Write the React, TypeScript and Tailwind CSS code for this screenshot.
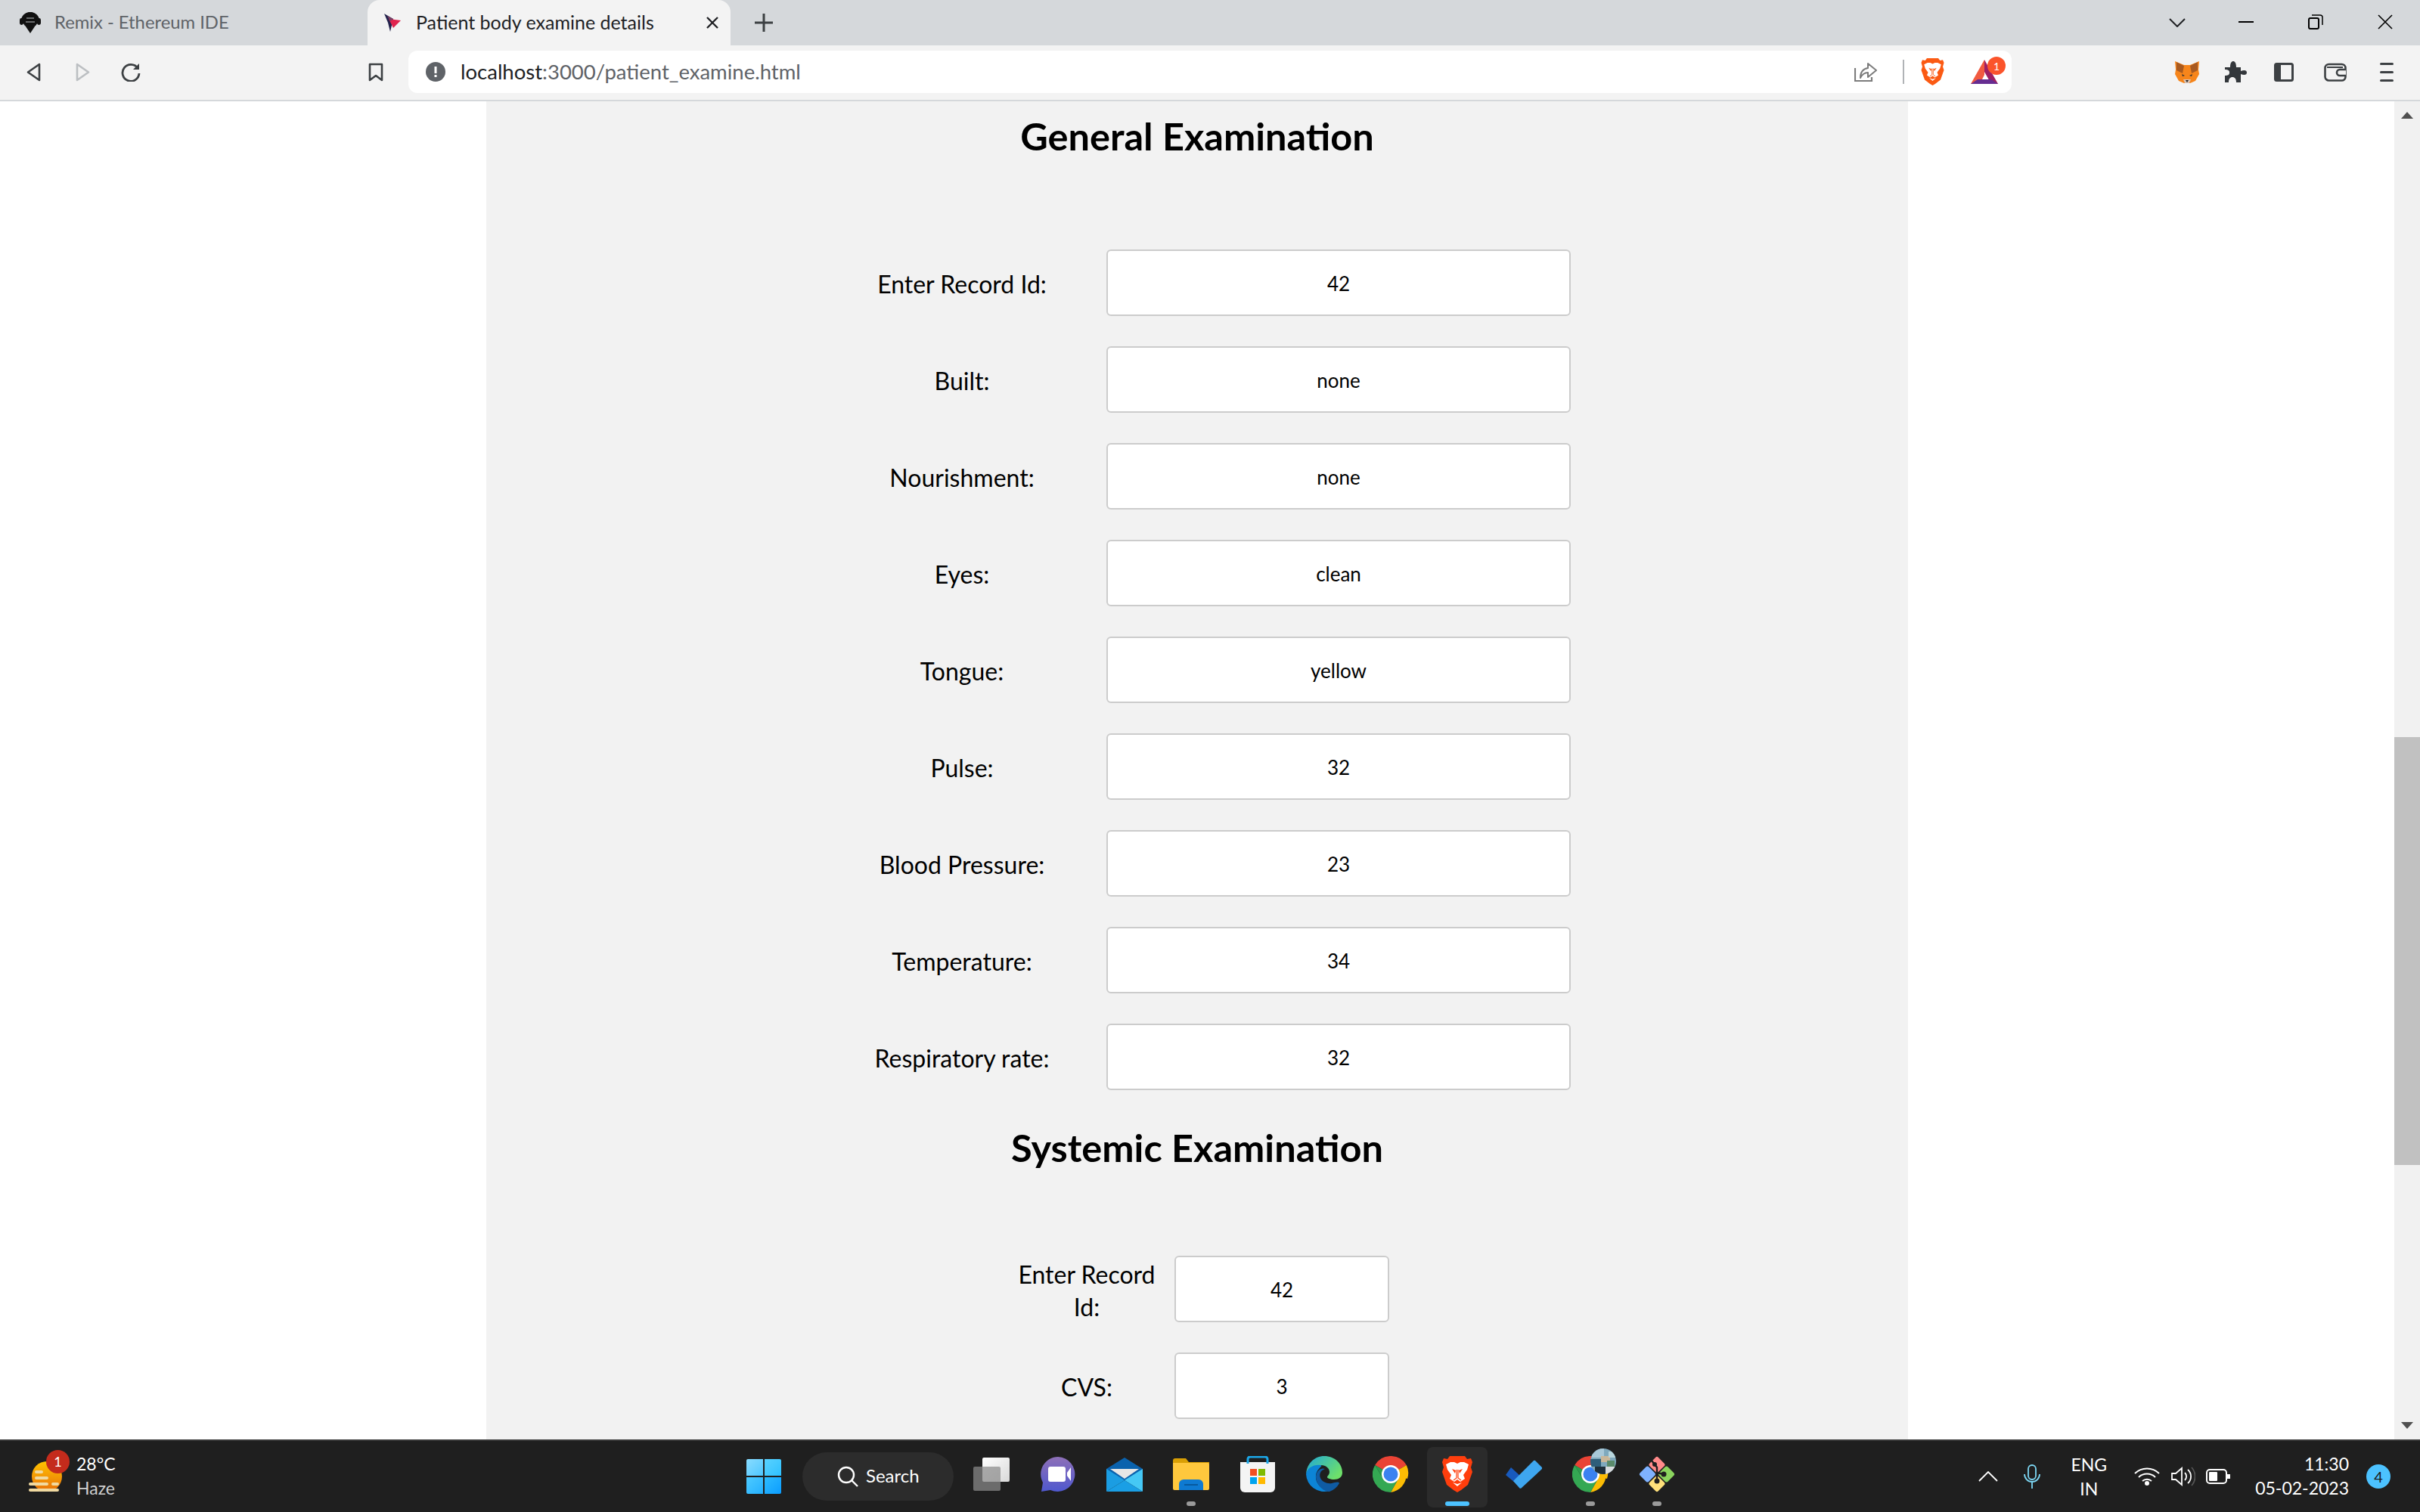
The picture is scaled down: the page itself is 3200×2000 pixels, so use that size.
import React from "react";

const generalRows: [string, string][] = [
  ["Enter Record Id:", "42"],
  ["Built:", "none"],
  ["Nourishment:", "none"],
  ["Eyes:", "clean"],
  ["Tongue:", "yellow"],
  ["Pulse:", "32"],
  ["Blood Pressure:", "23"],
  ["Temperature:", "34"],
  ["Respiratory rate:", "32"],
];

function Field({ label, value, wrapped }: { label: string; value: string; wrapped?: boolean }) {
  return (
    <>
      <label className={wrapped ? "translate-y-[2px] self-center text-center text-[32px] leading-[43px] text-black" : "translate-y-[1px] self-center text-center text-[32px] leading-[43px] text-black"}>{label}</label>
      <input
        readOnly
        value={value}
        className="h-[88px] w-full rounded-[6px] border-2 border-[#cccccc] bg-white pt-[1px] text-center text-[26px] text-black outline-none"
      />
    </>
  );
}

function BraveIcon({ w, h, bg }: { w: number; h: number; bg: string }) {
  return (
    <svg width={w} height={h} viewBox="0 0 40 48">
      <path d="M10 0H30L33 4L38 3L40 8L38 15L40 21L34 38L25 45L20 48L15 45L6 38L0 21L2 15L0 8L2 3L7 4Z" fill={bg} />
      <path d="M11 8H16L20 10L24 8H29L35 11L33 18L28 25L30 30L24 34L20 31L16 34L10 30L12 25L7 18L5 11Z" fill="#fff" />
      <path d="M20 37L26 35L20 40L14 35Z" fill="#fff" />
      <path d="M13 17L18 19L17 23ZM27 17L22 19L23 23Z" fill={bg} />
      <path d="M19 18V29L15 32M21 18V29L25 32" stroke={bg} strokeWidth="1.2" fill="none" />
    </svg>
  );
}

function Chrome({ size }: { size: number }) {
  return (
    <svg width={size} height={size} viewBox="0 0 48 48">
      <path d="M24 24L3.2 12A24 24 0 0 1 44.8 12Z" fill="#ea4335" />
      <path d="M24 24H44.8A24 24 0 0 1 24 48L34 30ZM44.8 12A24 24 0 0 1 46 30L24 24Z" fill="#fbbc04" />
      <path d="M24 48A24 24 0 0 1 3.2 12L14 30L24 24L34 30Z" fill="#34a853" />
      <path d="M3.2 12L14 30L24 24Z" fill="#2d9e4e" />
      <circle cx="24" cy="24" r="12" fill="#fff" />
      <circle cx="24" cy="24" r="9.5" fill="#3b82f0" />
    </svg>
  );
}

function TaskIcon({ children, dot, active }: { children: React.ReactNode; dot?: boolean; active?: boolean }) {
  return (
    <div className="relative flex h-[80px] w-[88px] items-center justify-center">
      {active && <div className="absolute inset-y-0 left-[4px] right-[4px] rounded-[8px] bg-[#2b2b2b]" />}
      <div className="relative -mt-[8px] flex items-center justify-center">{children}</div>
      {dot && <div className="absolute bottom-[2px] h-[6px] w-[12px] rounded-full bg-[#9a9a9a]" />}
      {active && <div className="absolute bottom-[2px] h-[6px] w-[32px] rounded-full bg-[#4cc2ff]" />}
    </div>
  );
}

export default function App() {
  return (
    <div className="flex h-[2000px] w-[3200px] flex-col overflow-hidden font-['Lato','Noto_Sans',sans-serif]">
      {/* tab strip */}
      <div className="flex h-[60px] shrink-0 items-end bg-[#d5d8db]">
        <div className="flex h-full w-[486px] items-center pl-[24px]">
          <svg width="32" height="28" viewBox="0 0 32 28" className="shrink-0">
            <circle cx="16" cy="11" r="10" fill="#111" />
            <path d="M16 28L10 19H22Z" fill="#111" />
            <path d="M5 12A11 11 0 0 1 27 12" stroke="#111" strokeWidth="2.4" fill="none" />
            <path d="M11 8H21M10 13H22" stroke="#d5d8db" strokeWidth="0.9" />
            <rect x="2" y="8" width="5" height="9" rx="2.4" fill="#111" />
            <rect x="25" y="8" width="5" height="9" rx="2.4" fill="#111" />
          </svg>
          <span className="ml-[16px] text-[23.8px] text-[#5f6368]">Remix - Ethereum IDE</span>
        </div>
        <div className="flex h-full w-[480px] items-center rounded-t-[16px] bg-[#f3f3f3] pl-[20px]">
          <svg width="26" height="24" viewBox="0 0 26 24" className="shrink-0">
            <path d="M2 0L14 7L10 24L7 12Z" fill="#24234d" />
            <path d="M8 7L24 9L14 19Z" fill="#e0234e" />
            <path d="M6 3L14 7L10 10Z" fill="#7d3f63" />
          </svg>
          <span className="ml-[18px] w-[383px] text-[25px] text-[#202124]">Patient body examine details</span>
          <svg width="18" height="16" viewBox="0 0 18 16" className="shrink-0">
            <path d="M2 1L16 15M16 1L2 15" stroke="#202124" strokeWidth="2.4" />
          </svg>
        </div>
        <div className="ml-[32px] flex h-full items-center">
          <svg width="24" height="24" viewBox="0 0 24 24">
            <path d="M12 0V24M0 12H24" stroke="#3c4043" strokeWidth="3" />
          </svg>
        </div>
        <div className="ml-auto flex h-full items-start">
          <svg width="22" height="12" viewBox="0 0 22 12" className="ml-0 mt-[24px]">
            <path d="M1 1L11 11L21 1" stroke="#202124" strokeWidth="2" fill="none" />
          </svg>
          <div className="ml-[70px] mt-[28px] h-[2px] w-[20px] bg-black" />
          <svg width="20" height="20" viewBox="0 0 20 20" className="ml-[72px] mt-[19px]">
            <rect x="1" y="5" width="13" height="14" rx="2" stroke="#000" strokeWidth="2" fill="none" />
            <path d="M5 1H16A3 3 0 0 1 19 4V14" stroke="#000" strokeWidth="1.5" fill="none" />
          </svg>
          <svg width="20" height="20" viewBox="0 0 20 20" className="ml-[72px] mr-[36px] mt-[19px]">
            <path d="M1 1L19 19M19 1L1 19" stroke="#000" strokeWidth="1.6" />
          </svg>
        </div>
      </div>

      {/* toolbar */}
      <div className="flex h-[74px] shrink-0 items-center border-b-2 border-[#d5d8db] bg-[#f3f3f3] pb-[2px]">
        <svg width="19" height="25" viewBox="0 0 19 25" className="ml-[35px]">
          <path d="M17 2L2 12.5L17 23Z" stroke="#3c4043" strokeWidth="2.6" fill="none" strokeLinejoin="round" />
        </svg>
        <svg width="19" height="25" viewBox="0 0 19 25" className="ml-[46px]">
          <path d="M2 2L17 12.5L2 23Z" stroke="#bcbfc2" strokeWidth="2.6" fill="none" strokeLinejoin="round" />
        </svg>
        <svg width="26" height="26" viewBox="0 0 26 26" className="ml-[41px]">
          <path d="M22 8A11 11 0 1 0 24 15" stroke="#3c4043" strokeWidth="2.8" fill="none" />
          <path d="M24 2V10H16Z" fill="#3c4043" />
        </svg>
        <svg width="20" height="25" viewBox="0 0 20 25" className="ml-[301px]">
          <path d="M2 2H18V23L10 17L2 23Z" stroke="#3c4043" strokeWidth="2.6" fill="none" strokeLinejoin="round" />
        </svg>
        <div className="ml-[33px] flex h-[56px] w-[2120px] items-center rounded-[12px] bg-white">
          <svg width="26" height="26" viewBox="0 0 26 26" className="ml-[23px]">
            <circle cx="13" cy="13" r="13" fill="#5f6368" />
            <rect x="11.5" y="6" width="3" height="9" fill="#fff" />
            <rect x="11.5" y="17" width="3" height="3" fill="#fff" />
          </svg>
          <span className="ml-[20px] text-[27.5px] text-[#202124]">
            localhost<span className="text-[#5f6368]">:3000/patient_examine.html</span>
          </span>
          <svg width="30" height="28" viewBox="0 0 30 28" className="ml-auto">
            <path d="M1 9V26H23V21" stroke="#7c7c7c" strokeWidth="2.2" fill="none" />
            <path d="M8 22C8 14 12 10 18 9V3L29 12L18 21V15C13 15 10 18 8 22Z" stroke="#7c7c7c" strokeWidth="2" fill="none" strokeLinejoin="round" />
          </svg>
          <div className="ml-[34px] h-[32px] w-[2px] bg-[#b0b3b6]" />
          <div className="ml-[22px]"><BraveIcon w={31} h={36} bg="#fb5a13" /></div>
          <div className="relative ml-[35px] mr-[18px]">
            <svg width="36" height="32" viewBox="0 0 36 32" className="block">
              <path d="M18 0L9 16L0 32H12L18 20Z" fill="#f15a40" />
              <path d="M18 0L36 32H27L18 16Z" fill="#9e1f63" />
              <path d="M0 32L9 26H27L36 32Z" fill="#662d91" />
            </svg>
            <div className="absolute -right-[10px] -top-[4px] flex h-[24px] w-[24px] items-center justify-center rounded-full bg-[#fb542b] text-[14px] text-white">1</div>
          </div>
        </div>
        <svg width="32" height="30" viewBox="0 0 32 30" className="ml-[216px]">
          <path d="M0 1L12 6H20L32 1L31 12L32 18L27 27L20 30H12L5 27L0 18L1 12Z" fill="#f6851b" />
          <path d="M2 2L12 7L10 17L2 13ZM30 2L20 7L22 17L30 13Z" fill="#a85a20" />
          <path d="M11 25H21L19 30H13Z" fill="#d7c1b3" />
          <path d="M14 26H18L16 29Z" fill="#222" />
          <path d="M9 18L13 20L10 21ZM23 18L19 20L22 21Z" fill="#333" />
        </svg>
        <svg width="29" height="28" viewBox="0 0 29 28" className="ml-[34px]">
          <path d="M0 8H7C7 2 9 0 11 0S15 2 15 8H21V13C26 11 29 12 29 15S26 19 21 17V28H15C15 23 13 21 10 21S5 23 5 28H0V19C4 19 6 18 6 15S4 11 0 11Z" fill="#33373b" />
        </svg>
        <svg width="26" height="25" viewBox="0 0 26 25" className="ml-[36px]">
          <rect x="1.5" y="1.5" width="23" height="22" rx="2" stroke="#3c4043" strokeWidth="3" fill="none" />
          <rect x="1" y="1" width="8" height="23" fill="#3c4043" />
        </svg>
        <svg width="30" height="26" viewBox="0 0 30 26" className="ml-[40px]">
          <rect x="1.5" y="3" width="27" height="21.5" rx="5" stroke="#3c4043" strokeWidth="2.6" fill="none" />
          <path d="M4 7H25" stroke="#3c4043" strokeWidth="2" />
          <path d="M29 10H21A4 4 0 0 0 21 18H29" stroke="#3c4043" strokeWidth="2.6" fill="#f3f3f3" />
        </svg>
        <div className="ml-[44px] flex h-[25px] w-[18px] flex-col justify-between">
          <div className="h-[3px] rounded-full bg-[#3c4043]" />
          <div className="h-[3px] rounded-full bg-[#3c4043]" />
          <div className="h-[3px] rounded-full bg-[#3c4043]" />
        </div>
      </div>

      {/* page */}
      <div className="flex min-h-0 flex-1 overflow-hidden bg-white">
        <div className="flex min-w-0 flex-1 justify-center">
          <div className="h-full w-[1880px] overflow-hidden bg-[#f2f2f2] pt-[14px]">
            <h1 className="text-center text-[50.5px] font-bold leading-[64px] text-black">General Examination</h1>
            <div className="mx-auto mt-[118px] grid w-[988px] grid-cols-[366px_614px] gap-x-[8px] gap-y-[40px]">
              {generalRows.map(([l, v]) => (
                <Field key={l} label={l} value={v} />
              ))}
            </div>
            <h1 className="mt-[44px] text-center text-[50.5px] font-bold leading-[64px] text-black">Systemic Examination</h1>
            <div className="mx-auto mt-[111px] grid w-[508px] grid-cols-[216px_284px] gap-x-[8px] gap-y-[40px]">
              <Field label="Enter Record Id:" value="42" wrapped />
              <Field label="CVS:" value="3" />
            </div>
          </div>
        </div>
        <div className="flex w-[34px] shrink-0 flex-col items-center bg-[#f1f1f1]">
          <div className="mt-[14px] h-0 w-0 border-x-[8px] border-b-[9px] border-x-transparent border-b-[#505050]" />
          <div className="mt-[818px] h-[566px] w-full bg-[#c1c1c1]" />
          <div className="mt-auto mb-[14px] h-0 w-0 border-x-[8px] border-t-[9px] border-x-transparent border-t-[#505050]" />
        </div>
      </div>

      {/* taskbar */}
      <div className="flex h-[96px] shrink-0 items-center border-t-2 border-[#3a3a3a] bg-[#1f1f1f] text-white">
        <div className="relative flex h-full w-[966px] shrink-0 items-center pl-[38px]">
          <svg width="45" height="40" viewBox="0 0 45 40" className="shrink-0">
            <defs>
              <linearGradient id="sun" x1="0" y1="0" x2="0" y2="1">
                <stop offset="0" stopColor="#ffc400" />
                <stop offset="1" stopColor="#e8700a" />
              </linearGradient>
            </defs>
            <circle cx="24" cy="20" r="20" fill="url(#sun)" />
            <g fill="#f0d9a0">
              <rect x="8" y="12" width="11" height="4" rx="2" />
              <rect x="8" y="20" width="18" height="4" rx="2" />
              <rect x="0" y="28" width="26" height="4" rx="2" />
              <rect x="30" y="28" width="10" height="4" rx="2" />
              <rect x="0" y="36" width="40" height="4" rx="2" />
            </g>
          </svg>
          <div className="absolute left-[61px] top-[12px] flex h-[31px] w-[31px] items-center justify-center rounded-full bg-[#c42b1c] text-[18px]">1</div>
          <div className="ml-[18px] -mt-[3px] flex flex-col text-[23px] leading-[32px]">
            <span>28°C</span>
            <span className="text-[#cfcfcf]">Haze</span>
          </div>
        </div>
        <div className="flex h-full w-[88px] shrink-0 items-center justify-center">
          <div className="grid h-[46px] w-[46px] grid-cols-2 gap-[2px]">
            <div className="rounded-tl-[2px] bg-gradient-to-br from-[#88dcff] to-[#4cc6ff]" />
            <div className="rounded-tr-[2px] bg-gradient-to-br from-[#58d2ff] to-[#2cc0ff]" />
            <div className="rounded-bl-[2px] bg-gradient-to-br from-[#4ccaff] to-[#22b0ff]" />
            <div className="rounded-br-[2px] bg-gradient-to-br from-[#2cbcff] to-[#0a9cff]" />
          </div>
        </div>
        <div className="ml-[7px] flex h-[64px] w-[200px] shrink-0 items-center rounded-full bg-[#2c2c2c] pl-[46px]">
          <svg width="28" height="28" viewBox="0 0 28 28">
            <circle cx="12" cy="12" r="10" stroke="#fff" strokeWidth="2.4" fill="none" />
            <path d="M19 19L27 27" stroke="#fff" strokeWidth="2.4" />
          </svg>
          <span className="ml-[10px] -mt-[2px] text-[24px]">Search</span>
        </div>
        <div className="ml-[6px] flex items-start pt-[2px]">
          <TaskIcon>
            <svg width="48" height="44" viewBox="0 0 48 44">
              <defs>
                <linearGradient id="tv1" x1="0" y1="0" x2="1" y2="1">
                  <stop offset="0" stopColor="#ffffff" />
                  <stop offset="1" stopColor="#d9d9d9" />
                </linearGradient>
              </defs>
              <rect x="12" y="0" width="36" height="32" rx="2" fill="url(#tv1)" />
              <rect x="0" y="12" width="36" height="32" rx="2" fill="#8a8a8a" fillOpacity="0.72" />
            </svg>
          </TaskIcon>
          <TaskIcon>
            <svg width="46" height="46" viewBox="0 0 46 46">
              <defs>
                <linearGradient id="meet" x1="0" y1="0" x2="0" y2="1">
                  <stop offset="0" stopColor="#8e70b8" />
                  <stop offset="1" stopColor="#4f58cf" />
                </linearGradient>
              </defs>
              <path d="M23 0A23 23 0 1 1 13 44L1 46L3 34A23 23 0 0 1 23 0Z" fill="url(#meet)" />
              <rect x="10" y="13" width="23" height="20" rx="3" fill="#fff" />
              <path d="M35 21L40 14V32L35 25Z" fill="#fff" />
            </svg>
          </TaskIcon>
          <TaskIcon>
            <svg width="48" height="45" viewBox="0 0 48 45">
              <path d="M0 15L24 0L48 15V30H0Z" fill="#0a62ad" />
              <path d="M5 15H43L24 28Z" fill="#e6e6e6" />
              <path d="M0 15L24 30L0 45Z" fill="#1b9de2" />
              <path d="M48 15V45L24 30Z" fill="#45c8f5" />
              <path d="M0 45L24 30L48 45Z" fill="#1a9fe5" />
            </svg>
          </TaskIcon>
          <TaskIcon dot>
            <svg width="48" height="42" viewBox="0 0 48 42">
              <path d="M0 3A3 3 0 0 1 3 0H17L21 5H48V10H0Z" fill="#d99f05" />
              <path d="M0 6H46A2 2 0 0 1 48 8V40A2 2 0 0 1 46 42H2A2 2 0 0 1 0 40Z" fill="#ffc83d" />
              <path d="M8 42V34A6 6 0 0 1 14 28H34A6 6 0 0 1 40 34V42Z" fill="#0e7ad2" />
              <path d="M15 35H33" stroke="#064f8c" strokeWidth="1.5" />
            </svg>
          </TaskIcon>
          <TaskIcon>
            <svg width="46" height="48" viewBox="0 0 46 48">
              <path d="M0 8H46V42A6 6 0 0 1 40 48H6A6 6 0 0 1 0 42Z" fill="#f4f4f4" />
              <path d="M10 10V4A3 3 0 0 1 13 1H33A3 3 0 0 1 36 4V10" stroke="#1ba7e8" strokeWidth="3" fill="none" />
              <rect x="13" y="17" width="9" height="9" fill="#f25022" />
              <rect x="24" y="17" width="9" height="9" fill="#7fba00" />
              <rect x="13" y="28" width="9" height="9" fill="#00a4ef" />
              <rect x="24" y="28" width="9" height="9" fill="#ffb900" />
            </svg>
          </TaskIcon>
          <TaskIcon>
            <svg width="48" height="48" viewBox="0 0 48 48">
              <defs>
                <linearGradient id="edge1" x1="0" y1="0" x2="1" y2="0.6">
                  <stop offset="0" stopColor="#1fa8d8" />
                  <stop offset="1" stopColor="#6ee06a" />
                </linearGradient>
              </defs>
              <path d="M24 0C38 0 48 10 48 22C48 28 43 31 37 31C32 31 28 29 28 28C28 26 31 25 31 21C31 16 26 12 20 12C10 12 1 18 0 24C1 10 11 0 24 0Z" fill="url(#edge1)" />
              <path d="M0 24C1 16 10 11 19 12C24 13 14 16 13 26C12 36 22 46 31 46A24 24 0 0 1 0 24Z" fill="#0c84d6" />
              <path d="M31 47C22 47 13 37 13 27C14 19 20 15 25 17C19 19 17 24 19 29C21 34 28 37 34 36C38 35 43 33 44 36A24 24 0 0 1 31 47Z" fill="#0f5ba3" />
            </svg>
          </TaskIcon>
          <TaskIcon><Chrome size={48} /></TaskIcon>
          <TaskIcon active><BraveIcon w={40} h={48} bg="#ff3e0d" /></TaskIcon>
          <TaskIcon>
            <svg width="48" height="38" viewBox="0 0 48 38">
              <path d="M0 20L7 10L20 22L12 30Z" fill="#185abd" />
              <path d="M10 28L37 1A2 2 0 0 1 39 1L48 10A2 2 0 0 1 48 12L21 37A2 2 0 0 1 18 37Z" fill="#3ea6ef" />
            </svg>
          </TaskIcon>
          <TaskIcon dot>
            <div className="relative">
              <Chrome size={48} />
              <svg width="34" height="34" viewBox="0 0 34 34" className="absolute -top-[10px] left-[24px]">
                <defs>
                  <clipPath id="av"><circle cx="17" cy="17" r="17" /></clipPath>
                </defs>
                <g clipPath="url(#av)">
                  <rect width="34" height="34" fill="#7fa9bd" />
                  <rect x="2" y="0" width="16" height="12" fill="#a8c8d8" />
                  <rect x="0" y="14" width="14" height="10" fill="#2e5e7a" />
                  <rect x="14" y="10" width="12" height="8" fill="#c9b79a" />
                  <rect x="22" y="16" width="10" height="8" fill="#5a8a6a" />
                  <rect x="6" y="24" width="14" height="10" fill="#1f2f3a" />
                  <rect x="20" y="24" width="12" height="10" fill="#d8dcde" />
                  <rect x="24" y="4" width="10" height="8" fill="#b8d6dd" />
                </g>
              </svg>
            </div>
          </TaskIcon>
          <TaskIcon dot>
            <svg width="48" height="48" viewBox="0 0 48 48">
              <g transform="rotate(45 24 24)">
                <rect x="7" y="7" width="16.2" height="16.2" rx="2.5" fill="#ff8a8a" />
                <rect x="24.8" y="7" width="16.2" height="16.2" rx="2.5" fill="#8bd45e" />
                <rect x="7" y="24.8" width="16.2" height="16.2" rx="2.5" fill="#7fb2ff" />
                <rect x="24.8" y="24.8" width="16.2" height="16.2" rx="2.5" fill="#ffe07a" />
              </g>
              <path d="M17 6L24 15V36M24 22L33 24" stroke="#1f1f1f" strokeWidth="2.4" fill="none" />
              <circle cx="24" cy="33" r="3.5" fill="#1f1f1f" />
              <circle cx="33" cy="24" r="3.5" fill="#1f1f1f" />
              <circle cx="21" cy="11" r="3" fill="#1f1f1f" />
            </svg>
          </TaskIcon>
        </div>
        <div className="ml-auto flex h-full items-center">
          <svg width="26" height="14" viewBox="0 0 26 14">
            <path d="M1 13L13 1L25 13" stroke="#fff" strokeWidth="1.8" fill="none" />
          </svg>
          <svg width="22" height="32" viewBox="0 0 22 32" className="ml-[34px]">
            <rect x="6" y="1" width="10" height="19" rx="5" stroke="#7dd8f5" strokeWidth="1.8" fill="none" />
            <path d="M1 13A10 10 0 0 0 21 13M11 23V32" stroke="#7dd8f5" strokeWidth="1.8" fill="none" />
          </svg>
          <div className="ml-[41px] flex flex-col items-center text-[23px] leading-[32px]">
            <span>ENG</span>
            <span>IN</span>
          </div>
          <svg width="34" height="24" viewBox="0 0 34 24" className="ml-[36px]">
            <path d="M1 8A23 23 0 0 1 33 8M6 13A16 16 0 0 1 28 13M11 18A9 9 0 0 1 23 18" stroke="#fff" strokeWidth="2" fill="none" />
            <circle cx="17" cy="21" r="3" fill="#fff" />
          </svg>
          <svg width="32" height="26" viewBox="0 0 32 26" className="ml-[15px]">
            <path d="M1 9H6L14 2V24L6 17H1Z" stroke="#fff" strokeWidth="1.8" fill="none" />
            <path d="M18 8A7 7 0 0 1 18 18M22 4A12 12 0 0 1 22 22" stroke="#fff" strokeWidth="1.8" fill="none" />
            <path d="M27 1A18 18 0 0 1 27 25" stroke="#555" strokeWidth="1.8" fill="none" />
          </svg>
          <svg width="32" height="20" viewBox="0 0 32 20" className="ml-[14px]">
            <rect x="1" y="1" width="26" height="18" rx="4" stroke="#fff" strokeWidth="2" fill="none" />
            <rect x="4" y="4" width="11" height="12" rx="1" fill="#fff" />
            <rect x="28" y="7" width="4" height="6" fill="#fff" />
          </svg>
          <div className="ml-[33px] -mt-[3px] flex flex-col items-end text-[23px] leading-[32px]">
            <span>11:30</span>
            <span>05-02-2023</span>
          </div>
          <div className="ml-[23px] mr-[39px] flex h-[32px] w-[32px] items-center justify-center rounded-full bg-[#4cc2ff] text-[20px] text-[#1b1b1b]">4</div>
        </div>
      </div>
    </div>
  );
}
